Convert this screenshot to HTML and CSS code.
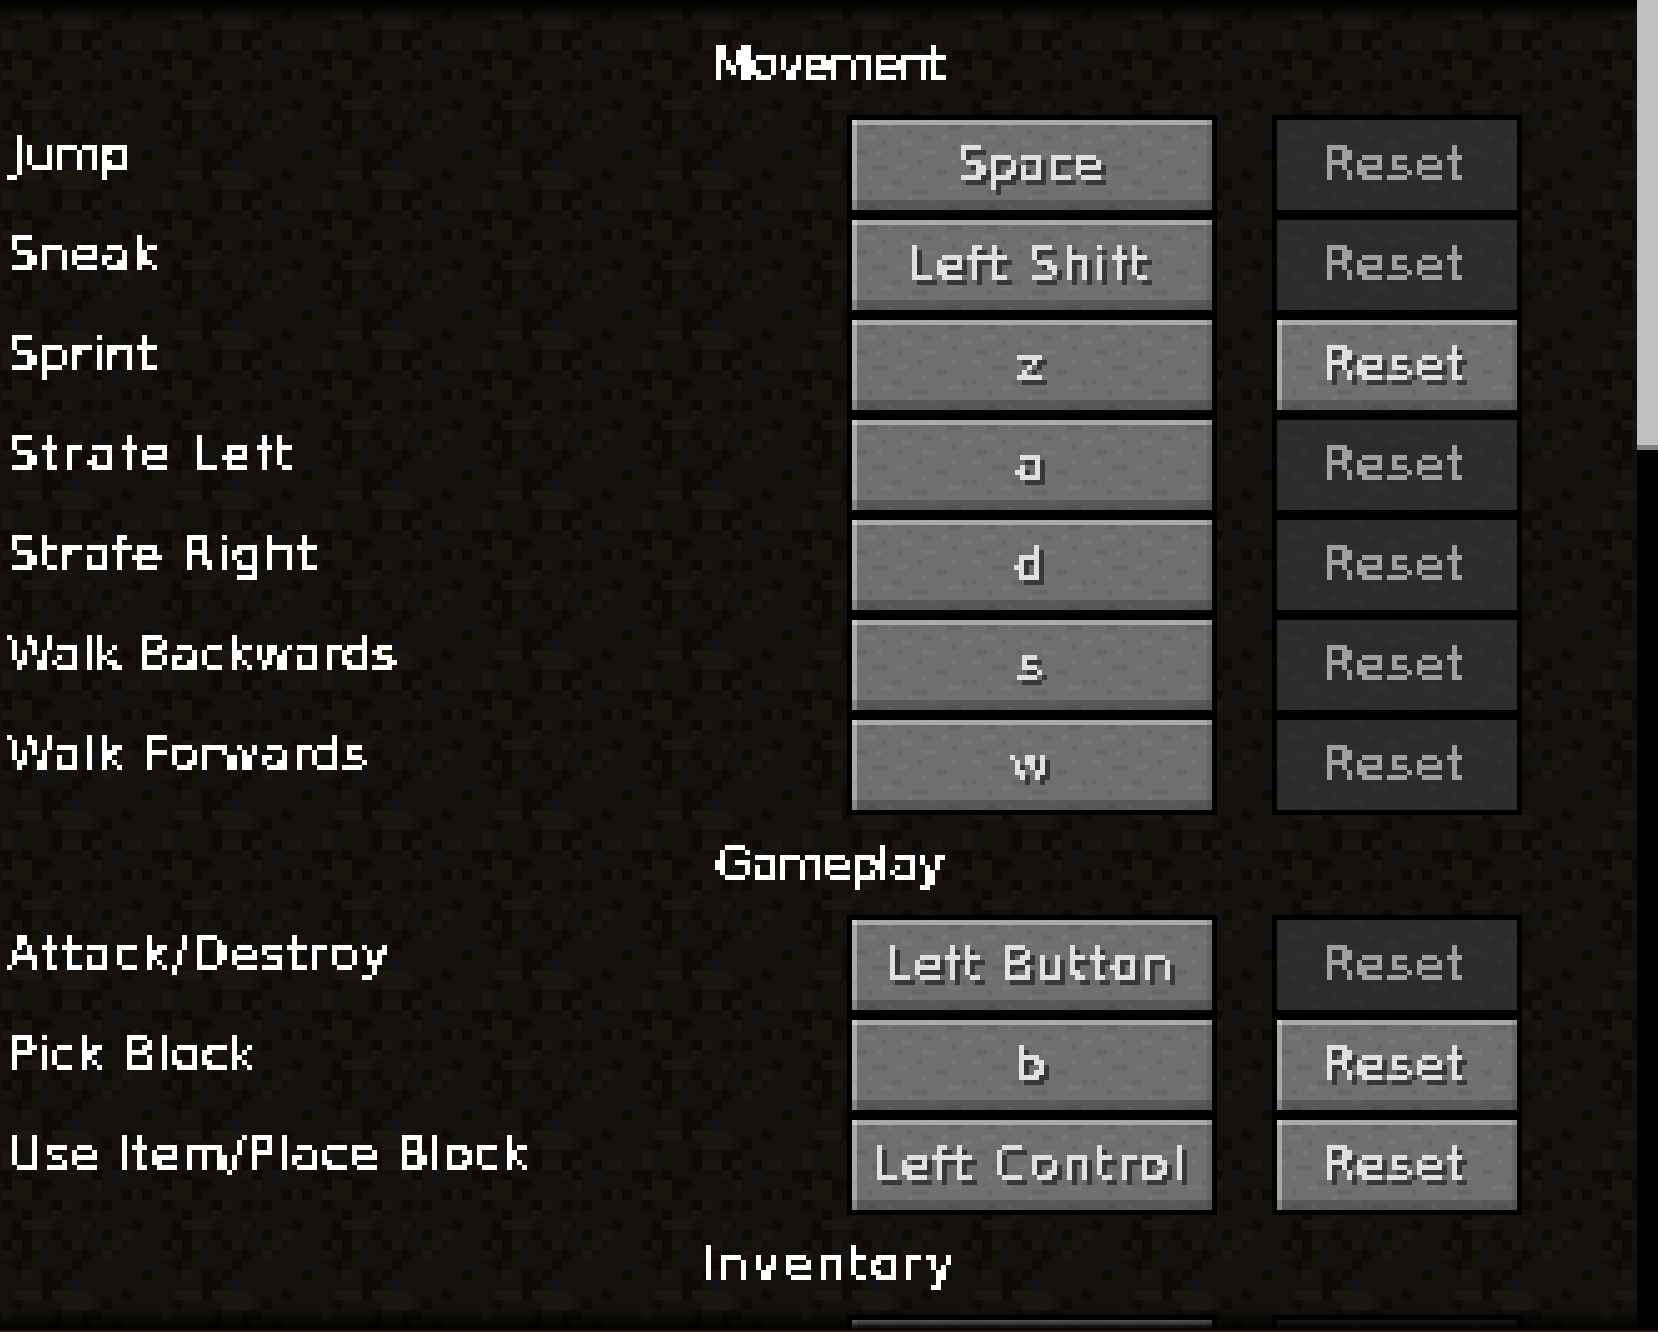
FILE: index.html
```html
<!DOCTYPE html>
<html lang="en">
<head>
  <meta charset="UTF-8" />
  <title>Key Bindings</title>
  <link rel="stylesheet" href="styles.css">
</head>
<body>
  <!-- snaps text to the 5px gui grid -->
  <svg class="filters" width="0" height="0">
    <filter id="pixel" color-interpolation-filters="sRGB">
      <feFlood x="2" y="2" width="1" height="1" flood-color="#fff" />
      <feComposite width="5" height="5" />
      <feTile result="grid" />
      <feComposite in="SourceGraphic" in2="grid" operator="in" />
      <feComponentTransfer>
        <feFuncA type="discrete" tableValues="0 0 1 1" />
      </feComponentTransfer>
      <feMorphology operator="dilate" radius="2" />
    </filter>
    <filter id="pixel-shadow" color-interpolation-filters="sRGB">
      <feFlood x="2" y="2" width="1" height="1" flood-color="#fff" />
      <feComposite width="5" height="5" />
      <feTile result="grid" />
      <feComposite in="SourceGraphic" in2="grid" operator="in" />
      <feComponentTransfer>
        <feFuncA type="discrete" tableValues="0 0 1 1" />
      </feComponentTransfer>
      <feMorphology operator="dilate" radius="2" result="text" />
      <feOffset dx="5" dy="5" result="moved" />
      <feFlood flood-color="#383838" result="shade" />
      <feComposite in="shade" in2="moved" operator="in" result="shadow" />
      <feMerge>
        <feMergeNode in="shadow" />
        <feMergeNode in="text" />
      </feMerge>
    </filter>
  </svg>

  <div class="screen">
    <div class="list">
      <div class="section"><span class="txt tight3">Movement</span></div>

      <div class="row">
        <div class="name"><span class="txt tight1 nudge">Jump</span></div>
        <button class="btn key"><span class="txt">Space</span></button>
        <button class="btn reset" disabled><span class="txt sp2">Reset</span></button>
      </div>
      <div class="row">
        <div class="name"><span class="txt sp1">Sneak</span></div>
        <button class="btn key"><span class="txt sp3">Left Shift</span></button>
        <button class="btn reset" disabled><span class="txt sp2">Reset</span></button>
      </div>
      <div class="row">
        <div class="name"><span class="txt sp1">Sprint</span></div>
        <button class="btn key"><span class="txt">z</span></button>
        <button class="btn reset"><span class="txt sp2">Reset</span></button>
      </div>
      <div class="row">
        <div class="name"><span class="txt sp4">Strafe Left</span></div>
        <button class="btn key"><span class="txt">a</span></button>
        <button class="btn reset" disabled><span class="txt sp2">Reset</span></button>
      </div>
      <div class="row">
        <div class="name"><span class="txt sp2">Strafe Right</span></div>
        <button class="btn key"><span class="txt">d</span></button>
        <button class="btn reset" disabled><span class="txt sp2">Reset</span></button>
      </div>
      <div class="row">
        <div class="name"><span class="txt">Walk Backwards</span></div>
        <button class="btn key"><span class="txt">s</span></button>
        <button class="btn reset" disabled><span class="txt sp2">Reset</span></button>
      </div>
      <div class="row">
        <div class="name"><span class="txt sp1">Walk Forwards</span></div>
        <button class="btn key"><span class="txt">w</span></button>
        <button class="btn reset" disabled><span class="txt sp2">Reset</span></button>
      </div>

      <div class="section"><span class="txt tight2 nudge">Gameplay</span></div>

      <div class="row">
        <div class="name"><span class="txt sp2">Attack/Destroy</span></div>
        <button class="btn key"><span class="txt sp2">Left Button</span></button>
        <button class="btn reset" disabled><span class="txt sp2">Reset</span></button>
      </div>
      <div class="row">
        <div class="name"><span class="txt sp1">Pick Block</span></div>
        <button class="btn key"><span class="txt">b</span></button>
        <button class="btn reset"><span class="txt sp2">Reset</span></button>
      </div>
      <div class="row">
        <div class="name"><span class="txt sp1">Use Item/Place Block</span></div>
        <button class="btn key"><span class="txt sp3">Left Control</span></button>
        <button class="btn reset"><span class="txt sp2">Reset</span></button>
      </div>

      <div class="section"><span class="txt sp3 nudge">Inventory</span></div>

      <div class="row">
        <div class="name"></div>
        <button class="btn key"></button>
        <button class="btn reset" disabled></button>
      </div>
    </div>

    <div class="scrollbar"><div class="thumb"></div></div>
  </div>
</body>
</html>
```

FILE: styles.css
```css
:root {
  /* 16x16 dirt tile, one unit = 10px on screen */
  --dirt: url("data:image/svg+xml,%3Csvg xmlns='http://www.w3.org/2000/svg' viewBox='0 0 16 16' shape-rendering='crispEdges'%3E%3Cpath fill='%2314100b' d='M0 0h16v16H0z'/%3E%3Cpath fill='%230e0b07' d='M4 0h2v1H4zM4 1h1v1H4zM12 1h1v1h-1zM1 2h1v1H1zM10 2h1v1h-1zM5 3h1v1H5zM8 3h2v1H8zM5 4h1v1H5zM8 4h1v1H8zM11 4h1v1h-1zM0 5h1v1H0zM2 5h1v1H2zM9 5h1v1H9zM15 5h1v1h-1zM0 6h1v1H0zM3 6h2v1H3zM3 7h1v1H3zM12 7h1v1h-1zM14 7h1v1h-1zM0 8h1v1H0zM5 8h1v1H5zM8 8h1v1H8zM10 8h1v1h-1zM2 9h1v1H2zM1 10h1v1H1zM13 10h1v1h-1zM1 11h2v1H1zM5 11h1v1H5zM10 11h1v1h-1zM0 12h1v1H0zM2 12h1v1H2zM6 12h1v1H6zM2 13h1v1H2zM8 13h1v1H8zM1 14h1v1H1zM7 14h1v1H7zM4 15h1v1H4zM6 15h1v1H6zM14 15h1v1h-1z'/%3E%3Cpath fill='%231a150e' d='M1 1h3v1H1zM5 1h4v1H5zM6 2h3v1H6zM0 3h1v1H0zM0 4h1v1H0zM6 4h2v1H6zM9 4h1v1H9zM12 4h2v1h-2zM8 5h1v1H8zM1 6h2v1H1zM9 6h1v1H9zM0 7h3v1H0zM13 7h1v1h-1zM6 8h1v1H6zM5 9h1v1H5zM2 10h3v1H2zM8 10h1v1H8zM12 11h1v1h-1zM1 12h1v1H1zM3 12h1v1H3zM7 12h1v1H7zM11 12h1v1h-1zM0 13h1v1H0zM10 13h1v1h-1zM2 15h1v1H2z'/%3E%3Cpath fill='%23101319' d='M7 0h1v1H7zM1 4h1v1H1zM11 5h1v1h-1zM9 9h1v1H9zM9 11h1v1H9zM4 13h1v1H4zM14 14h1v1h-1z'/%3E%3C/svg%3E");
  /* speckle laid over button colour, one unit = 5px */
  --stone: url("data:image/svg+xml,%3Csvg xmlns='http://www.w3.org/2000/svg' viewBox='0 0 24 16' shape-rendering='crispEdges'%3E%3Cpath fill='%23000' fill-opacity='.07' d='M3 1h2v1H3zM11 2h1v1h-1zM19 1h3v1h-3zM6 4h1v1H6zM14 3h2v1h-2zM1 6h2v1H1zM9 6h1v1H9zM20 5h1v1h-1zM4 9h3v1H4zM13 8h1v1h-1zM17 10h2v1h-2zM0 12h1v1H0zM8 12h2v1H8zM22 12h1v1h-1zM12 14h3v1h-3zM3 14h1v1H3z'/%3E%3Cpath fill='%23fff' fill-opacity='.05' d='M7 1h1v1H7zM15 0h2v1h-2zM2 3h3v1H2zM18 3h1v1h-1zM10 4h2v1h-2zM22 4h2v1h-2zM5 6h1v1H5zM14 6h3v1h-3zM0 8h2v1H0zM9 9h2v1H9zM20 8h1v1h-1zM3 11h1v1H3zM14 11h1v1h-1zM19 13h3v1h-3zM6 13h2v1H6zM11 15h1v1h-1z'/%3E%3C/svg%3E");
}

html, body {
  margin: 0;
  padding: 0;
  height: 100%;
  background: #211811;
  overflow: hidden;
}

.filters {
  position: absolute;
}

.screen {
  display: flex;
  height: 1330px;
  font-family: "DejaVu Sans", sans-serif;
  font-size: 48px;
  background: var(--dirt) 2px 0 / 160px 160px;
}

/* text box: cap height 35px from the top, room below for shadow and descenders */
.txt {
  display: block;
  line-height: 37px;
  padding: 0 5px 10px 0;
  white-space: nowrap;
  color: #fff;
  -webkit-text-stroke: 0.7px;
  filter: url(#pixel);
}

.sp1 { letter-spacing: 1px; }
.sp2 { letter-spacing: 2px; }
.sp3 { letter-spacing: 3px; }
.sp4 { letter-spacing: 3.6px; }
.tight1 { letter-spacing: -1px; }
.tight2 { letter-spacing: -2px; }
.tight3 { letter-spacing: -3px; }
.nudge { margin-left: 5px; }

.list {
  flex: 1;
  position: relative;
  padding: 20px 0 0 7px;
  overflow: hidden;
}

/* fades at the top and bottom of the list */
.list::before,
.list::after {
  content: "";
  position: absolute;
  left: 0;
  right: 0;
  height: 20px;
  z-index: 2;
}
.list::before {
  top: 0;
  background: linear-gradient(#000, transparent);
}
.list::after {
  bottom: 0;
  background: linear-gradient(transparent, #000);
}

.section {
  display: flex;
  justify-content: center;
  height: 100px;
  padding: 25px 0 0 14px;
  box-sizing: border-box;
}

.row {
  display: flex;
  height: 100px;
}

.name {
  display: flex;
  flex: 0 0 845px;
  padding-top: 15px;
  box-sizing: border-box;
}

.btn {
  display: flex;
  justify-content: center;
  align-items: flex-start;
  height: 90px;
  margin: 0;
  padding: 25px 0 0;
  border: 0;
  font: inherit;
  background: #6f6f6f var(--stone) 0 0 / 120px 80px;
  box-shadow:
    0 0 0 5px #000,
    inset 0 -10px 0 rgba(0, 0, 0, 0.2),
    inset -5px 0 0 rgba(0, 0, 0, 0.1),
    inset 0 5px 0 rgba(255, 255, 255, 0.4),
    inset 5px 0 0 rgba(255, 255, 255, 0.4);
}

.btn .txt {
  color: #e0e0e0;
  filter: url(#pixel-shadow);
}

.btn:disabled {
  background:
    linear-gradient(rgba(44, 44, 44, 0.6), rgba(44, 44, 44, 0.6)),
    #2c2c2c var(--stone) 0 0 / 120px 80px;
  box-shadow: 0 0 0 5px #000;
}

.btn:disabled .txt {
  color: #a0a0a0;
  filter: url(#pixel);
}

.key {
  flex: 0 0 360px;
}

.reset {
  flex: 0 0 240px;
  margin-left: 65px;
}

.scrollbar {
  flex: 0 0 21px;
  background: #000;
}

.thumb {
  height: 445px;
  background: #c0c0c0;
  border-bottom: 5px solid #808080;
}
```
